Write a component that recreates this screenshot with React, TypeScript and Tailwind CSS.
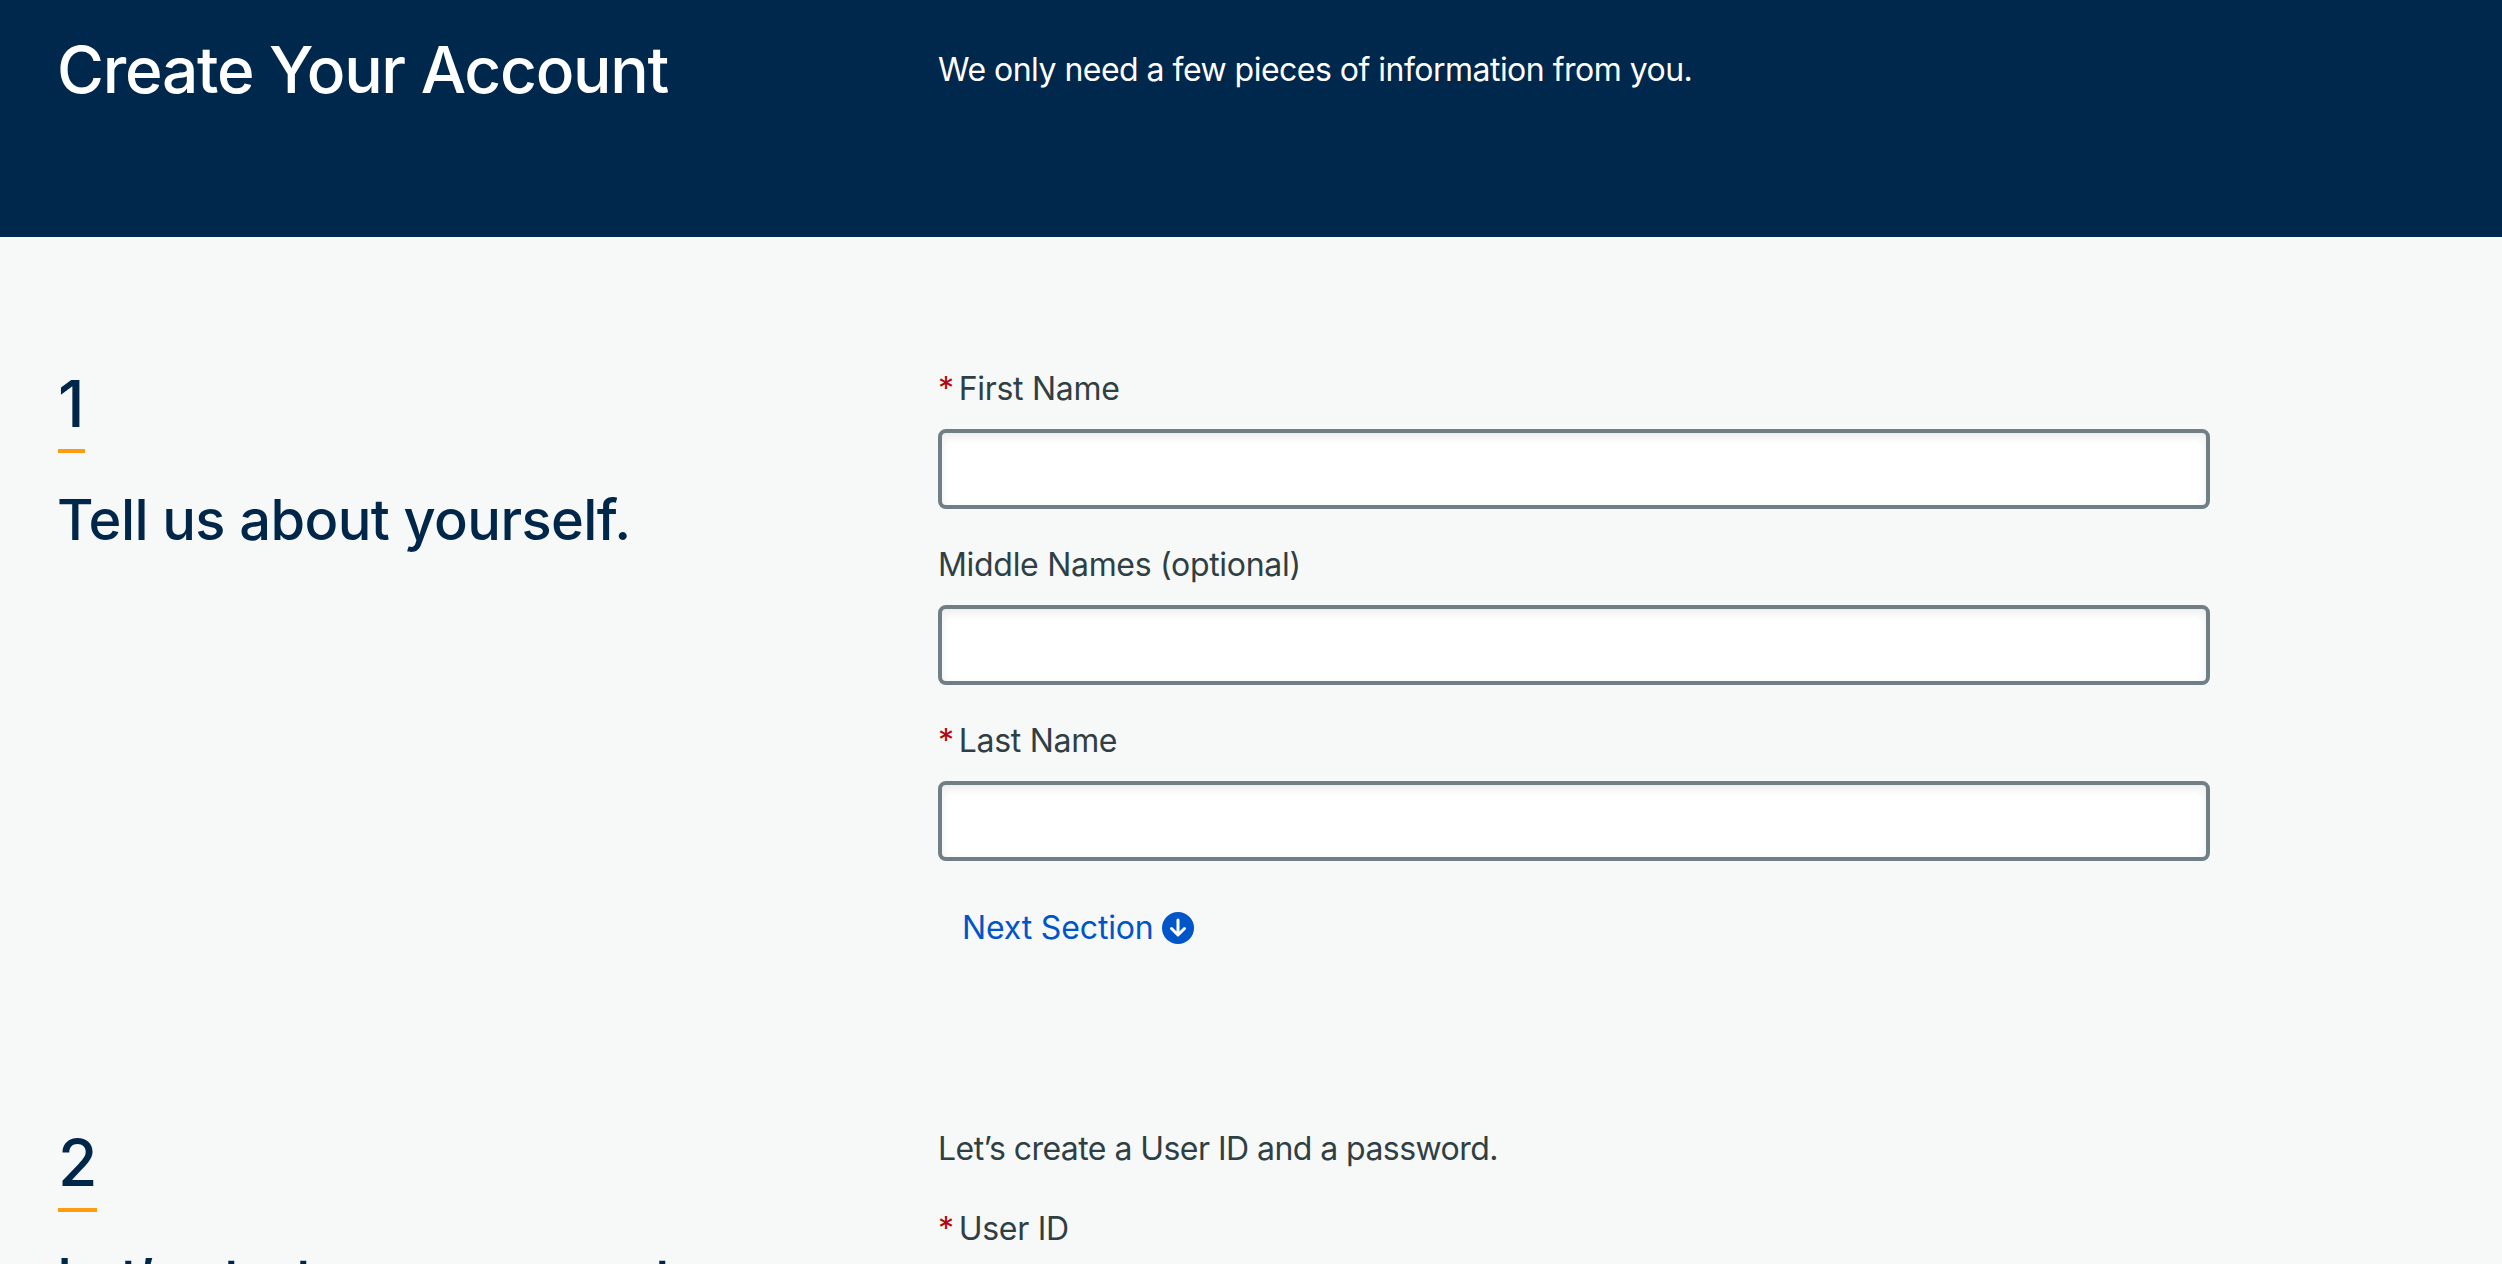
const font = { fontFamily: '"Inter", "Liberation Sans", sans-serif' };

function Field({ label, required }: { label: string; required?: boolean }) {
  return (
    <div className="mb-[32px]">
      <label className="block h-[64px] text-[32px] leading-[40px] tracking-[-0.3px] text-[#2f3f44] pt-[4px]">
        {required && <span className="text-[#b50909] mr-[5px]">*</span>}
        {label}
      </label>
      <div className="h-[80px] w-[1272px] rounded-[8px] border-[4px] border-[#6f7f85] bg-white shadow-[inset_0_4px_8px_rgba(0,0,0,0.08)]" />
    </div>
  );
}

function Heading({ n, title }: { n: string; title: string }) {
  return (
    <div className="w-[938px] shrink-0 pl-[58px]">
      <div className="inline-block border-b-[4px] border-[#ff9b0f] pb-[6px] text-[64px] leading-[78px] font-medium text-[#002749]">{n}</div>
      <h2 className="mt-[31px] -ml-[1px] text-[56px] leading-[72px] tracking-[-0.6px] font-medium text-[#002749]">{title}</h2>
    </div>
  );
}

export default function App() {
  return (
    <div style={font} className="h-[1264px] overflow-hidden bg-[#f7f9f9]">
      <header className="flex h-[237px] bg-[#00274c] text-white">
        <h1 className="w-[938px] shrink-0 pl-[57px] pt-[30px] text-[64px] leading-[80px] tracking-[-1.26px] font-medium">Create Your Account</h1>
        <p className="pt-[50px] text-[32px] leading-[40px] tracking-[-0.52px]">We only need a few pieces of information from you.</p>
      </header>
      <section className="flex h-[759px] pt-[128px]">
        <Heading n="1" title="Tell us about yourself." />
        <div>
          <Field label="First Name" required />
          <Field label="Middle Names (optional)" />
          <Field label="Last Name" required />
          <a className="ml-[24px] mt-[47px] flex items-center gap-[8px] text-[32px] leading-[40px] tracking-[-0.15px] text-[#0055c8]">
            Next Section
            <svg width="32" height="32" viewBox="0 0 32 32">
              <circle cx="16" cy="16" r="16" fill="#0055c8" />
              <path d="M16 8v15M9.500 16.500 16 23l6.500-6.500" fill="none" stroke="#fff" strokeWidth="3" strokeLinecap="round" strokeLinejoin="round" />
            </svg>
          </a>
        </div>
      </section>
      <section className="flex pt-[128px]">
        <Heading n="2" title="Let’s start your account." />
        <div className="pt-[5px]">
          <p className="text-[32px] leading-[40px] tracking-[-0.55px] text-[#2f3f44]">Let’s create a User ID and a password.</p>
          <label className="mt-[40px] block text-[32px] leading-[40px] tracking-[-0.3px] text-[#2f3f44]">
            <span className="text-[#b50909] mr-[5px]">*</span>User ID
          </label>
        </div>
      </section>
    </div>
  );
}
